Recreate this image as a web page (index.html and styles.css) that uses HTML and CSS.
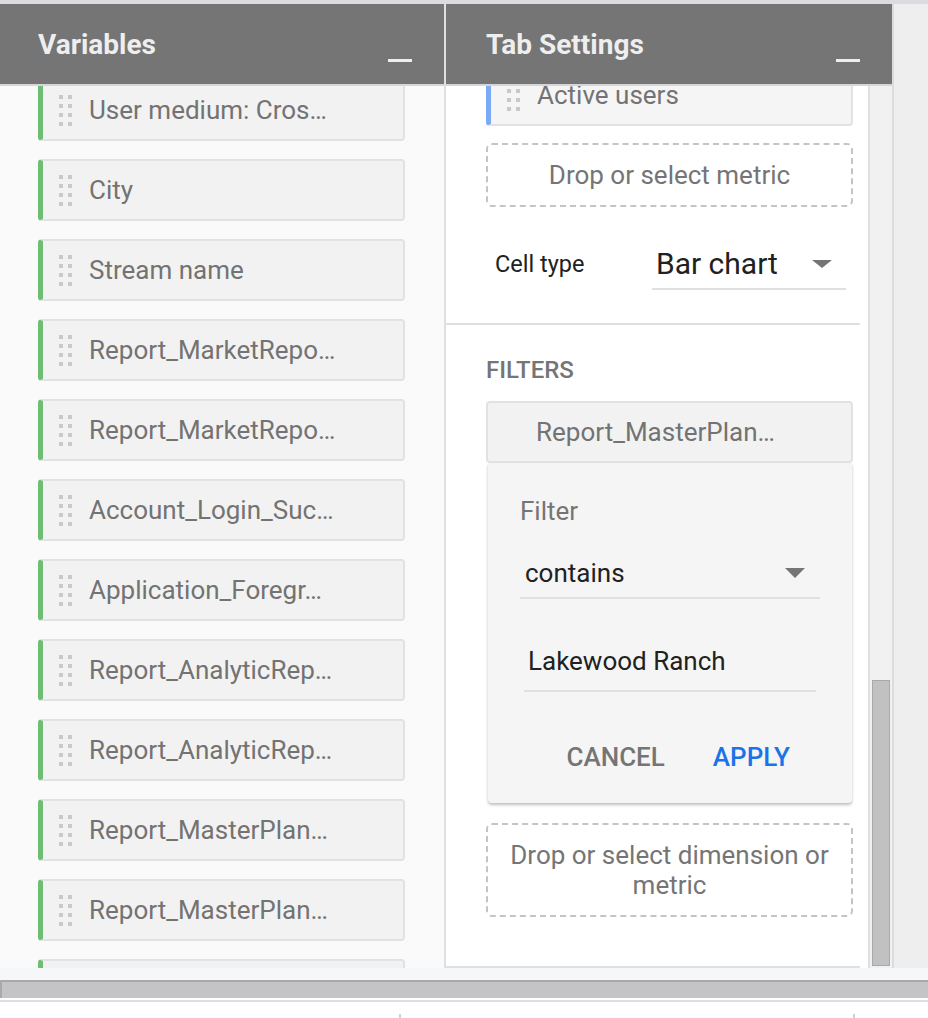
FILE: index.html
```html
<!DOCTYPE html>
<html lang="en">
<head>
<meta charset="utf-8">
<title>Variables / Tab Settings</title>
<link rel="stylesheet" href="styles.css">
</head>
<body>
<div class="topline"></div>
<div class="main">
  <section class="panel left">
    <header class="phead"><h2>Variables</h2><span class="minbar"></span></header>
    <div class="pbody">
      <div class="list">
        <div class="item"><svg class="grip" viewBox="0 0 13 31"><g fill="#c9c9c9"><rect x="0" y="0" width="4" height="4"/><rect x="9" y="0" width="4" height="4"/><rect x="0" y="9" width="4" height="4"/><rect x="9" y="9" width="4" height="4"/><rect x="0" y="18" width="4" height="4"/><rect x="9" y="18" width="4" height="4"/><rect x="0" y="27" width="4" height="4"/><rect x="9" y="27" width="4" height="4"/></g></svg><span class="itext">User medium: Cros…</span></div>
        <div class="item"><svg class="grip" viewBox="0 0 13 31"><g fill="#c9c9c9"><rect x="0" y="0" width="4" height="4"/><rect x="9" y="0" width="4" height="4"/><rect x="0" y="9" width="4" height="4"/><rect x="9" y="9" width="4" height="4"/><rect x="0" y="18" width="4" height="4"/><rect x="9" y="18" width="4" height="4"/><rect x="0" y="27" width="4" height="4"/><rect x="9" y="27" width="4" height="4"/></g></svg><span class="itext">City</span></div>
        <div class="item"><svg class="grip" viewBox="0 0 13 31"><g fill="#c9c9c9"><rect x="0" y="0" width="4" height="4"/><rect x="9" y="0" width="4" height="4"/><rect x="0" y="9" width="4" height="4"/><rect x="9" y="9" width="4" height="4"/><rect x="0" y="18" width="4" height="4"/><rect x="9" y="18" width="4" height="4"/><rect x="0" y="27" width="4" height="4"/><rect x="9" y="27" width="4" height="4"/></g></svg><span class="itext">Stream name</span></div>
        <div class="item"><svg class="grip" viewBox="0 0 13 31"><g fill="#c9c9c9"><rect x="0" y="0" width="4" height="4"/><rect x="9" y="0" width="4" height="4"/><rect x="0" y="9" width="4" height="4"/><rect x="9" y="9" width="4" height="4"/><rect x="0" y="18" width="4" height="4"/><rect x="9" y="18" width="4" height="4"/><rect x="0" y="27" width="4" height="4"/><rect x="9" y="27" width="4" height="4"/></g></svg><span class="itext">Report_MarketRepo…</span></div>
        <div class="item"><svg class="grip" viewBox="0 0 13 31"><g fill="#c9c9c9"><rect x="0" y="0" width="4" height="4"/><rect x="9" y="0" width="4" height="4"/><rect x="0" y="9" width="4" height="4"/><rect x="9" y="9" width="4" height="4"/><rect x="0" y="18" width="4" height="4"/><rect x="9" y="18" width="4" height="4"/><rect x="0" y="27" width="4" height="4"/><rect x="9" y="27" width="4" height="4"/></g></svg><span class="itext">Report_MarketRepo…</span></div>
        <div class="item"><svg class="grip" viewBox="0 0 13 31"><g fill="#c9c9c9"><rect x="0" y="0" width="4" height="4"/><rect x="9" y="0" width="4" height="4"/><rect x="0" y="9" width="4" height="4"/><rect x="9" y="9" width="4" height="4"/><rect x="0" y="18" width="4" height="4"/><rect x="9" y="18" width="4" height="4"/><rect x="0" y="27" width="4" height="4"/><rect x="9" y="27" width="4" height="4"/></g></svg><span class="itext">Account_Login_Suc…</span></div>
        <div class="item"><svg class="grip" viewBox="0 0 13 31"><g fill="#c9c9c9"><rect x="0" y="0" width="4" height="4"/><rect x="9" y="0" width="4" height="4"/><rect x="0" y="9" width="4" height="4"/><rect x="9" y="9" width="4" height="4"/><rect x="0" y="18" width="4" height="4"/><rect x="9" y="18" width="4" height="4"/><rect x="0" y="27" width="4" height="4"/><rect x="9" y="27" width="4" height="4"/></g></svg><span class="itext">Application_Foregr…</span></div>
        <div class="item"><svg class="grip" viewBox="0 0 13 31"><g fill="#c9c9c9"><rect x="0" y="0" width="4" height="4"/><rect x="9" y="0" width="4" height="4"/><rect x="0" y="9" width="4" height="4"/><rect x="9" y="9" width="4" height="4"/><rect x="0" y="18" width="4" height="4"/><rect x="9" y="18" width="4" height="4"/><rect x="0" y="27" width="4" height="4"/><rect x="9" y="27" width="4" height="4"/></g></svg><span class="itext">Report_AnalyticRep…</span></div>
        <div class="item"><svg class="grip" viewBox="0 0 13 31"><g fill="#c9c9c9"><rect x="0" y="0" width="4" height="4"/><rect x="9" y="0" width="4" height="4"/><rect x="0" y="9" width="4" height="4"/><rect x="9" y="9" width="4" height="4"/><rect x="0" y="18" width="4" height="4"/><rect x="9" y="18" width="4" height="4"/><rect x="0" y="27" width="4" height="4"/><rect x="9" y="27" width="4" height="4"/></g></svg><span class="itext">Report_AnalyticRep…</span></div>
        <div class="item"><svg class="grip" viewBox="0 0 13 31"><g fill="#c9c9c9"><rect x="0" y="0" width="4" height="4"/><rect x="9" y="0" width="4" height="4"/><rect x="0" y="9" width="4" height="4"/><rect x="9" y="9" width="4" height="4"/><rect x="0" y="18" width="4" height="4"/><rect x="9" y="18" width="4" height="4"/><rect x="0" y="27" width="4" height="4"/><rect x="9" y="27" width="4" height="4"/></g></svg><span class="itext">Report_MasterPlan…</span></div>
        <div class="item"><svg class="grip" viewBox="0 0 13 31"><g fill="#c9c9c9"><rect x="0" y="0" width="4" height="4"/><rect x="9" y="0" width="4" height="4"/><rect x="0" y="9" width="4" height="4"/><rect x="9" y="9" width="4" height="4"/><rect x="0" y="18" width="4" height="4"/><rect x="9" y="18" width="4" height="4"/><rect x="0" y="27" width="4" height="4"/><rect x="9" y="27" width="4" height="4"/></g></svg><span class="itext">Report_MasterPlan…</span></div>
        <div class="item"></div>
      </div>
    </div>
  </section>
  <div class="vdiv"></div>
  <section class="panel right">
    <header class="phead"><h2>Tab Settings</h2><span class="minbar"></span></header>
    <div class="rbody">
      <div class="rwrap">
        <div class="rcontent">
          <div class="sec sec1">
            <div class="item blue"><svg class="grip" viewBox="0 0 13 31"><g fill="#c9c9c9"><rect x="0" y="0" width="4" height="4"/><rect x="9" y="0" width="4" height="4"/><rect x="0" y="9" width="4" height="4"/><rect x="9" y="9" width="4" height="4"/><rect x="0" y="18" width="4" height="4"/><rect x="9" y="18" width="4" height="4"/><rect x="0" y="27" width="4" height="4"/><rect x="9" y="27" width="4" height="4"/></g></svg><span class="itext">Active users</span></div>
            <div class="dropbox">Drop or select metric</div>
            <div class="cellrow">
              <span class="celllabel">Cell type</span>
              <div class="bigselect"><span>Bar chart</span><i class="caret small"></i></div>
            </div>
          </div>
          <div class="sec sec2">
            <div class="seclabel">FILTERS</div>
            <div class="chip">Report_MasterPlan…</div>
            <div class="popup">
              <div class="plabel">Filter</div>
              <div class="pselect"><span>contains</span><i class="caret"></i></div>
              <div class="pinput">Lakewood Ranch</div>
              <div class="pbtns"><span class="cancel">CANCEL</span><span class="apply">APPLY</span></div>
            </div>
            <div class="dropbox tall">Drop or select dimension or metric</div>
          </div>
        </div>
      </div>
      <div class="track"><div class="thumb"></div></div>
    </div>
  </section>
  <div class="outer"></div>
</div>
<div class="bottom">
  <div class="hgap"></div>
  <div class="hscroll"></div>
  <div class="hsep"></div>
  <div class="hline"></div>
  <div class="ticks"><span></span><span></span></div>
</div>
</body>
</html>
```
FILE: styles.css
```css
html, body {
  margin: 0;
  padding: 0;
}
body {
  width: 928px;
  height: 1018px;
  overflow: hidden;
  background: #ffffff;
  font-family: Roboto, "Noto Sans", "Liberation Sans", sans-serif;
}
.topline {
  height: 4px;
  background: #dcdce0;
}
.main {
  display: flex;
  height: 964px;
}
.panel {
  display: flex;
  flex-direction: column;
  min-height: 0;
}
.left {
  width: 444px;
  background: #fafafa;
}
.vdiv {
  width: 2px;
  background: #e0e0e0;
}
.right {
  width: 446px;
}
.outer {
  flex: 1;
  background: #eeeeee;
  border-left: 2px solid #dcdcdc;
}
.phead {
  height: 82px;
  flex-shrink: 0;
  box-sizing: border-box;
  background: #757575;
  border-bottom: 2px solid #d6d6d6;
  display: flex;
  align-items: center;
  justify-content: space-between;
  padding: 0 32px 0 38px;
}
.right .phead {
  padding-left: 40px;
}
.phead h2 {
  margin: 0;
  font-size: 28px;
  font-weight: 700;
  color: #eeeeee;
}
.minbar {
  width: 24px;
  height: 3px;
  background: #eeeeee;
  align-self: flex-start;
  margin-top: 55px;
}
.pbody {
  flex: 1;
  min-height: 0;
  overflow: hidden;
}
.list {
  padding-left: 38px;
  margin-top: -7px;
  display: flex;
  flex-direction: column;
  gap: 18px;
}
.item {
  width: 367px;
  height: 62px;
  flex-shrink: 0;
  box-sizing: border-box;
  display: flex;
  align-items: center;
  gap: 17px;
  padding-left: 16px;
  background: #f2f2f2;
  border: 2px solid #e2e2e2;
  border-left: 5px solid #6cbf72;
  border-radius: 4px;
}
.grip {
  width: 13px;
  height: 31px;
  flex-shrink: 0;
}
.itext {
  font-size: 26px;
  color: #737373;
  white-space: nowrap;
}
.rbody {
  flex: 1;
  min-height: 0;
  display: flex;
}
.rwrap {
  width: 422px;
  background: #ffffff;
  overflow: hidden;
}
.rcontent {
  width: 414px;
  height: 100%;
  box-sizing: border-box;
  border-bottom: 2px solid #e0e0e0;
  overflow: hidden;
}
.track {
  width: 22px;
  border-left: 2px solid #e0e0e0;
  background: #f1f1f1;
}
.thumb {
  margin: 594px 2px 0 2px;
  height: 286px;
  box-sizing: border-box;
  background: #c1c1c1;
  border: 1px solid #a9a9a9;
}
.sec1 {
  padding: 0 7px 33px 40px;
  border-bottom: 2px solid #e0e0e0;
}
.sec2 {
  padding: 0 7px 0 40px;
}
.item.blue {
  margin-top: -22px;
  background: #f5f5f5;
  border-left-color: #7baaf7;
}
.item.blue + .dropbox {
  margin-top: 17px;
}
.dropbox {
  margin-top: 18px;
  border: 2px dashed #c4c4c4;
  border-radius: 6px;
  text-align: center;
  font-size: 26px;
  line-height: 60px;
  color: #757575;
}
.dropbox.tall {
  margin-top: 20px;
  line-height: 30px;
  padding: 15px 20px;
}
.cellrow {
  display: flex;
  align-items: flex-start;
  margin-top: 37px;
}
.celllabel {
  width: 166px;
  box-sizing: border-box;
  padding-left: 9px;
  font-size: 23.5px;
  line-height: 40px;
  color: #212121;
}
.bigselect {
  width: 194px;
  box-sizing: border-box;
  display: flex;
  align-items: center;
  justify-content: space-between;
  padding: 0 14px 4px 4px;
  border-bottom: 2px solid #e0e0e0;
  font-size: 30px;
  line-height: 40px;
  color: #212121;
}
.caret {
  width: 0;
  height: 0;
  border-left: 10px solid transparent;
  border-right: 10px solid transparent;
  border-top: 10px solid #757575;
}
.caret.small {
  border-top-width: 8px;
}
.seclabel {
  margin-top: 30px;
  font-size: 24px;
  font-weight: 500;
  line-height: 30px;
  color: #757575;
}
.chip {
  margin-top: 16px;
  height: 62px;
  box-sizing: border-box;
  display: flex;
  align-items: center;
  padding-left: 48px;
  background: #f2f2f2;
  border: 2px solid #e2e2e2;
  border-radius: 4px;
  font-size: 26px;
  color: #737373;
}
.popup {
  margin: 0 1px 0 2px;
  height: 340px;
  box-sizing: border-box;
  padding: 33px 32px 0;
  background: #f5f5f5;
  border-radius: 0 0 4px 4px;
  box-shadow: 0 2px 3px rgba(0, 0, 0, 0.25);
}
.plabel {
  font-size: 26px;
  line-height: 30px;
  color: #757575;
}
.pselect {
  margin-top: 27px;
  display: flex;
  align-items: center;
  justify-content: space-between;
  padding: 0 15px 4px 5px;
  border-bottom: 2px solid #e0e0e0;
  font-size: 26px;
  line-height: 40px;
  color: #212121;
}
.pinput {
  margin: 42px 4px 0;
  padding: 0 4px 9px;
  border-bottom: 2px solid #e0e0e0;
  font-size: 26px;
  line-height: 40px;
  color: #212121;
}
.pbtns {
  margin-top: 45px;
  display: flex;
  justify-content: flex-end;
  gap: 48px;
  padding-right: 30px;
  font-size: 26px;
  font-weight: 500;
  line-height: 40px;
}
.cancel {
  color: #757575;
}
.apply {
  color: #1a73e8;
}
.hgap {
  height: 12px;
  background: #f6f7f9;
}
.hscroll {
  height: 18px;
  box-sizing: border-box;
  background: #c4c4c6;
  border-top: 2px solid #a9a9ab;
  border-left: 2px solid #a9a9ab;
}
.hsep {
  height: 2px;
  background: #ffffff;
}
.hline {
  height: 2px;
  background: #dedee0;
}
.ticks {
  height: 16px;
  display: flex;
  align-items: flex-end;
  padding-left: 399px;
}
.ticks span {
  width: 2px;
  height: 4px;
  background: #d0d0d0;
}
.ticks span + span {
  margin-left: 452px;
}
```
